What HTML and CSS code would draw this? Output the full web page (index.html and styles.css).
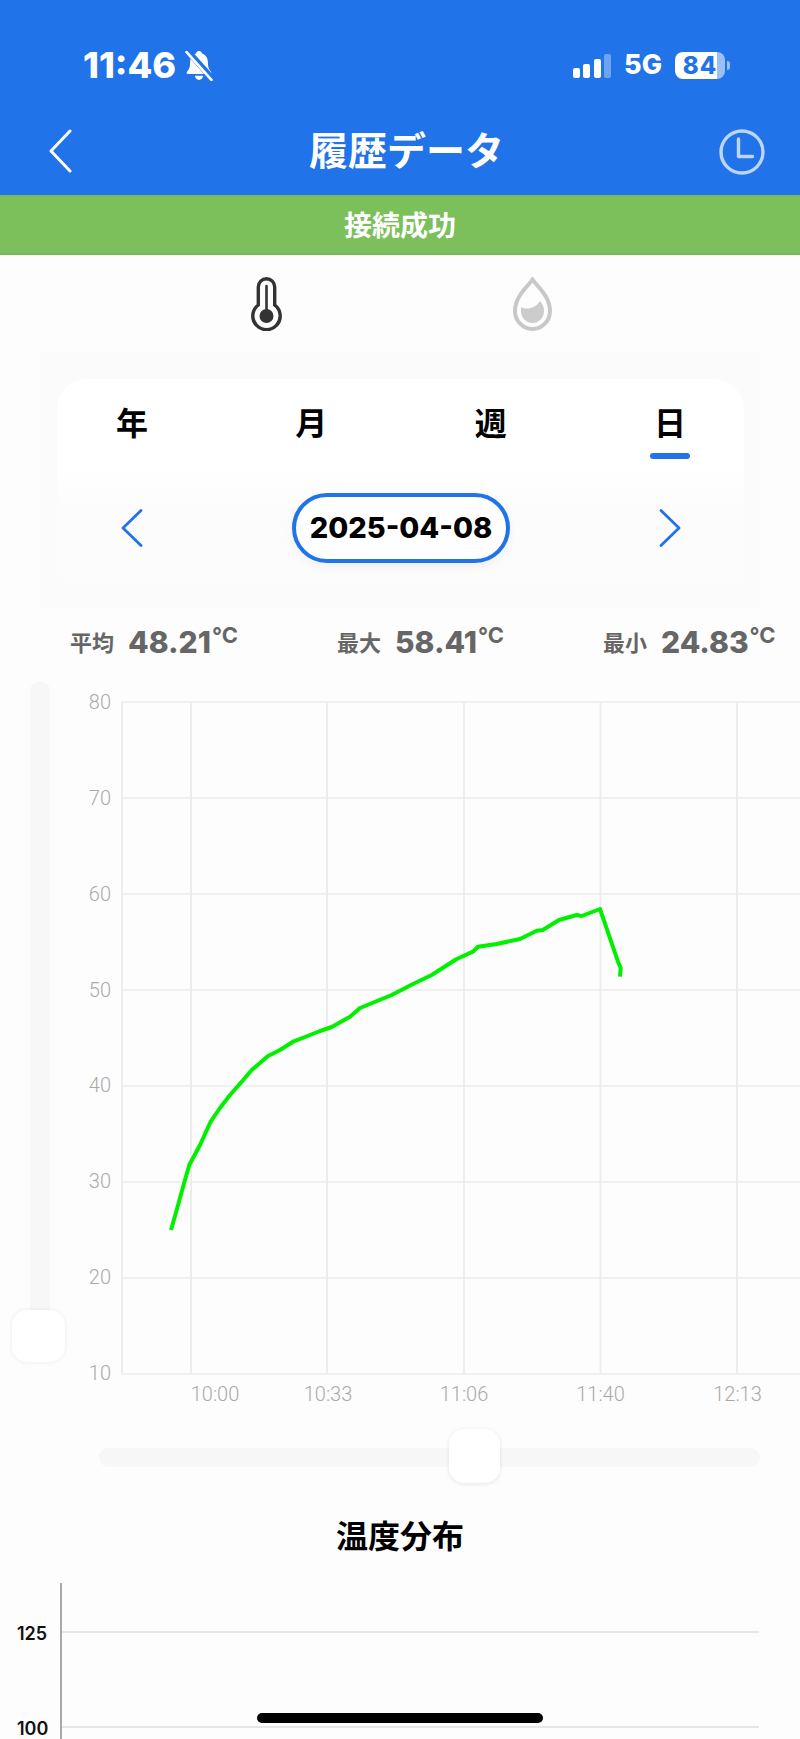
FILE: index.html
```html
<!DOCTYPE html>
<html lang="ja">
<head>
  <meta charset="UTF-8" />
  <meta name="viewport" content="width=device-width, initial-scale=1.0" />
  <title>履歴データ</title>
  <link rel="stylesheet" href="styles.css">
</head>
<body>
  <header class="top">
    <div class="status">
      <div class="status-left">
        <span class="time">11:46</span>
        <svg class="bell" viewBox="0 0 28 30">
          <path d="M14 1c-1.600 0-2.600 1-2.800 2.400C7.400 4.600 5.400 7.800 5.400 12c0 4.400-1 6.800-3 9-.8.900-.3 2.200 1 2.200h21.200c1.300 0 1.800-1.300 1-2.200-2-2.200-3-4.600-3-9 0-4.200-2-7.400-5.800-8.600C16.600 2 15.600 1 14 1z" fill="#fff"/>
          <path d="M10 25h8c-.4 2.400-2 4-4 4s-3.600-1.600-4-4z" fill="#fff"/>
          <path d="M3 1l24 27" stroke="#2073e8" stroke-width="6"/>
          <path d="M2 2l24 27" stroke="#fff" stroke-width="2.600" stroke-linecap="round"/>
        </svg>
      </div>
      <div class="status-right">
        <div class="signal">
          <i class="bar bar1"></i>
          <i class="bar bar2"></i>
          <i class="bar bar3"></i>
          <i class="bar bar4"></i>
        </div>
        <span class="network">5G</span>
        <div class="battery"><span>84</span></div>
      </div>
    </div>
    <div class="nav">
      <svg class="back" viewBox="0 0 24 44">
        <path d="M22 2L3 22l19 20" fill="none" stroke="#fff" stroke-width="3" stroke-linecap="round" stroke-linejoin="round"/>
      </svg>
      <h1>履歴データ</h1>
      <svg class="history" viewBox="0 0 46 46">
        <circle cx="23" cy="23" r="21" fill="none" stroke="#fff" stroke-opacity="0.7" stroke-width="3.400"/>
        <path d="M19.500 10v17.500h14" fill="none" stroke="#fff" stroke-opacity="0.7" stroke-width="3.400" stroke-linecap="round" stroke-linejoin="round"/>
      </svg>
    </div>
  </header>

  <div class="banner">接続成功</div>

  <div class="modes">
    <svg class="thermo" viewBox="0 0 31 54">
      <path d="M7.300 28V9.900a8.200 8.200 0 0 1 16.400 0V28a13.700 13.700 0 1 1-16.400 0z" fill="none" stroke="#333" stroke-width="3.400"/>
      <circle cx="15.500" cy="39" r="7" fill="#333"/>
      <path d="M15.500 9v28" stroke="#333" stroke-width="2.600" stroke-linecap="round"/>
    </svg>
    <svg class="drop" viewBox="0 0 39 54">
      <path d="M19.500 2.500C15 9.500 2 19 2 34a17.500 18 0 0 0 35 0C37 19 24 9.500 19.500 2.500z" fill="none" stroke="#c8c8c8" stroke-width="4"/>
      <path d="M8 30c5 3 14 2 19-6 3 3 4 7 4 10a11.500 12 0 0 1-23 0z" fill="#ccc"/>
    </svg>
  </div>

  <section class="panel">
    <div class="card">
      <div class="tabs">
        <div class="tab">年</div>
        <div class="tab">月</div>
        <div class="tab">週</div>
        <div class="tab active">日</div>
      </div>
      <div class="date-row">
        <svg class="arrow" viewBox="0 0 22 38">
          <path d="M20 1.500L2 19l18 17.500" fill="none" stroke="#2073e8" stroke-width="2.800" stroke-linecap="round" stroke-linejoin="round"/>
        </svg>
        <div class="date-pill">2025-04-08</div>
        <svg class="arrow" viewBox="0 0 22 38">
          <path d="M2 1.500L20 19 2 36.500" fill="none" stroke="#2073e8" stroke-width="2.800" stroke-linecap="round" stroke-linejoin="round"/>
        </svg>
      </div>
    </div>
  </section>

  <div class="stats">
    <div class="stat"><span class="stat-label">平均</span><span class="stat-value">48.21</span><sup class="stat-unit">°C</sup></div>
    <div class="stat"><span class="stat-label">最大</span><span class="stat-value">58.41</span><sup class="stat-unit">°C</sup></div>
    <div class="stat"><span class="stat-label">最小</span><span class="stat-value">24.83</span><sup class="stat-unit">°C</sup></div>
  </div>

  <div class="chart-area">
    <div class="v-track"><div class="v-thumb"></div></div>
    <svg class="line-chart" viewBox="60 678 740 742">
      <g class="grid">
        <path d="M122 702H800M122 798H800M122 894H800M122 990H800M122 1086H800M122 1182H800M122 1278H800M122 1374H800"/>
        <path class="thin" d="M122 702V1374M191 702V1374M327 702V1374M464 702V1374M600.500 702V1374M737 702V1374"/>
      </g>
      <g class="y-labels">
        <text x="111" y="709">80</text>
        <text x="111" y="805">70</text>
        <text x="111" y="901">60</text>
        <text x="111" y="997">50</text>
        <text x="111" y="1092">40</text>
        <text x="111" y="1188">30</text>
        <text x="111" y="1284">20</text>
        <text x="111" y="1380">10</text>
      </g>
      <g class="x-labels">
        <text x="215" y="1401">10:00</text>
        <text x="328" y="1401">10:33</text>
        <text x="464" y="1401">11:06</text>
        <text x="600.500" y="1401">11:40</text>
        <text x="737.500" y="1401">12:13</text>
      </g>
      <polyline class="curve" points="171,1230 176.700,1210 183,1187 189.300,1165 200,1145 210.700,1121.700 220,1108 230,1095 241.700,1081.700 251.700,1070 268,1056 280,1050 293,1041.700 305,1037 320,1031 331.700,1027 350,1016.700 360,1008 391.700,995 413,984 431.700,975 456.700,959 473,951.700 478,946.700 496.700,944 520,939 536.700,930.700 542.700,930 559,920 576.700,915 581.700,916 600,909 618,961.700 620.700,968 620,976.700"/>
    </svg>
  </div>

  <div class="h-track"><div class="h-thumb"></div></div>

  <h2>温度分布</h2>

  <svg class="dist-chart" viewBox="0 1583 800 156">
    <path class="dist-grid" d="M61 1632H759M61 1727H759"/>
    <path class="dist-axis" d="M61 1583V1739"/>
    <text x="17" y="1640">125</text>
    <text x="17" y="1735">100</text>
  </svg>

  <div class="home-bar"></div>
</body>
</html>
```

FILE: styles.css
```css
body {
  margin: 0;
  width: 800px;
  height: 1739px;
  overflow: hidden;
  position: relative;
  background-color: #fdfdfd;
  color: #000;
  font-family: "Noto Sans CJK JP", sans-serif;
}

svg {
  display: block;
}

.top {
  height: 195px;
  background-color: #2073e8;
  color: #fff;
}

.status {
  height: 129px;
  box-sizing: border-box;
  padding: 47px 75px 0 83px;
  display: flex;
  justify-content: space-between;
  align-items: flex-start;
  font-family: Inter, sans-serif;
  font-weight: 800;
}

.status-left {
  display: flex;
  align-items: center;
  height: 36px;
  gap: 8px;
}

.time {
  font-size: 36px;
  line-height: 36px;
}

.bell {
  width: 30px;
  height: 31px;
}

.status-right {
  display: flex;
  align-items: center;
  height: 36px;
}

.signal {
  display: flex;
  align-items: flex-end;
  gap: 3.500px;
  height: 24px;
  margin-top: 2px;
  margin-right: 13px;
}

.bar {
  width: 7px;
  border-radius: 2px;
  background-color: #fff;
}

.bar1 { height: 10px; }
.bar2 { height: 14px; }
.bar3 { height: 19px; }
.bar4 { height: 24px; opacity: 0.35; }

.network {
  font-size: 27px;
  line-height: 36px;
  margin-right: 13px;
}

.battery {
  width: 50px;
  height: 27px;
  border-radius: 8px;
  background: linear-gradient(to right, #fff 84%, rgba(255, 255, 255, 0.55) 84%);
  position: relative;
  color: #2073e8;
  font-size: 24px;
  letter-spacing: 1px;
  line-height: 27px;
  text-align: center;
}

.battery::after {
  content: "";
  position: absolute;
  left: 52px;
  top: 9px;
  width: 3px;
  height: 9px;
  border-radius: 0 3px 3px 0;
  background-color: rgba(255, 255, 255, 0.55);
}

.nav {
  height: 46px;
  padding: 0 35px 0 48px;
  display: grid;
  grid-template-columns: 1fr auto 1fr;
  align-items: center;
}

.back {
  width: 24px;
  height: 44px;
  margin-top: -2px;
}

.nav h1 {
  margin: -9px 0 0;
  font-size: 39px;
  line-height: 46px;
  font-weight: 700;
}

.history {
  width: 46px;
  height: 46px;
  justify-self: end;
}

.banner {
  height: 60px;
  box-sizing: border-box;
  border-top: 2px solid #76bb57;
  border-bottom: 2px solid #76bb57;
  background-color: #7bc05a;
  color: #fff;
  font-size: 28px;
  font-weight: 700;
  line-height: 55px;
  text-align: center;
}

.modes {
  height: 98px;
  box-sizing: border-box;
  padding: 22px 0 0 251px;
  display: flex;
  gap: 231px;
}

.thermo {
  width: 31px;
  height: 54px;
}

.drop {
  width: 39px;
  height: 54px;
}

.panel {
  height: 255px;
  box-sizing: border-box;
  margin: 0 40px;
  padding: 26px 16px 23px 17px;
  background-color: #fbfbfb;
}

.card {
  height: 206px;
  box-sizing: border-box;
  padding-top: 22px;
  border-radius: 30px 30px 8px 8px;
  background: linear-gradient(to bottom, #fff 40%, #fcfcfc 65%);
}

.tabs {
  height: 58px;
  padding: 0 54px 0 55px;
  display: flex;
  justify-content: space-between;
}

.tab {
  width: 40px;
  font-size: 32px;
  font-weight: 700;
  line-height: 40px;
  text-align: center;
}

.tab.active::after {
  content: "";
  display: block;
  height: 6px;
  margin-top: 12px;
  border-radius: 3px;
  background-color: #2073e8;
}

.date-row {
  margin-top: 34px;
  padding: 0 63px 0 64px;
  display: flex;
  justify-content: space-between;
  align-items: center;
}

.arrow {
  width: 22px;
  height: 38px;
}

.date-pill {
  width: 218px;
  height: 70px;
  box-sizing: border-box;
  border: 4px solid #2073e8;
  border-radius: 35px;
  background-color: #fff;
  box-shadow: 0 4px 10px rgba(0, 0, 0, 0.05);
  font-family: Inter, sans-serif;
  font-size: 29px;
  font-weight: 800;
  line-height: 62px;
  text-align: center;
}

.stats {
  height: 70px;
  padding-left: 70px;
  display: grid;
  grid-template-columns: 267px 266px 1fr;
  align-items: center;
  color: #666;
}

.stat {
  display: flex;
  align-items: center;
  white-space: nowrap;
}

.stat-label {
  font-size: 22px;
  font-weight: 700;
  margin-top: -4px;
  margin-right: 14px;
}

.stat-value {
  font-family: Inter, sans-serif;
  font-size: 30px;
  font-weight: 800;
  margin-top: -2px;
}

.stat-unit {
  font-family: Inter, sans-serif;
  font-size: 22px;
  font-weight: 700;
  line-height: 20px;
  margin-top: -16px;
  margin-left: 1px;
  vertical-align: baseline;
}

.chart-area {
  height: 742px;
  display: flex;
}

.v-track {
  width: 20px;
  height: 642px;
  margin: 3px 0 0 30px;
  border-radius: 10px;
  background-color: #f7f7f7;
  position: relative;
}

.v-thumb {
  position: absolute;
  left: -18px;
  top: 629px;
  width: 53px;
  height: 52px;
  border-radius: 15px;
  background-color: #fff;
  box-shadow: 0 0 4px rgba(0, 0, 0, 0.08);
}

.line-chart {
  width: 740px;
  height: 742px;
  margin-left: 10px;
}

.grid path {
  fill: none;
  stroke: #f0f0f0;
  stroke-width: 2;
}

.grid .thin {
  stroke: #ededed;
}

.y-labels text,
.x-labels text {
  font-family: Roboto, sans-serif;
  font-size: 20px;
  font-weight: 300;
  fill: #aaa;
}

.y-labels text {
  text-anchor: end;
}

.x-labels text {
  text-anchor: middle;
}

.curve {
  fill: none;
  stroke: #00f000;
  stroke-width: 4;
  stroke-linejoin: round;
}

.h-track {
  width: 661px;
  height: 19px;
  margin: 28px 0 0 99px;
  border-radius: 10px;
  background-color: #f7f7f7;
  position: relative;
}

.h-thumb {
  position: absolute;
  left: 350px;
  top: -19px;
  width: 51px;
  height: 54px;
  border-radius: 15px;
  background-color: #fff;
  box-shadow: 0 1px 4px rgba(0, 0, 0, 0.1);
}

h2 {
  margin: 45px 0 27px;
  font-size: 32px;
  font-weight: 700;
  line-height: 44px;
  text-align: center;
}

.dist-chart {
  width: 800px;
  height: 156px;
}

.dist-grid {
  fill: none;
  stroke: #e6e6e6;
  stroke-width: 2;
}

.dist-axis {
  fill: none;
  stroke: #aaa;
  stroke-width: 2;
}

.dist-chart text {
  font-family: Inter, sans-serif;
  font-size: 18px;
  font-weight: 600;
  fill: #111;
}

.home-bar {
  position: absolute;
  left: 257px;
  top: 1713px;
  width: 286px;
  height: 10px;
  border-radius: 5px;
  background-color: #000;
}
```
